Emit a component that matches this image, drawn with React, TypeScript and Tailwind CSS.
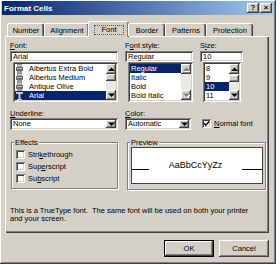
import React from 'react';

const FONT = "font-['Liberation_Sans',Arial,sans-serif]";
const RAISED =
  'shadow-[inset_-1px_-1px_#404040,inset_1px_1px_#ffffff,inset_-2px_-2px_#808080,inset_2px_2px_#d4d0c8]';
const SUNKEN =
  'shadow-[inset_1px_1px_#808080,inset_-1px_-1px_#ffffff,inset_2px_2px_#404040,inset_-2px_-2px_#d4d0c8]';

function Arrow({ dir, disabled }: { dir: 'up' | 'down'; disabled?: boolean }) {
  const pts = dir === 'up' ? '0,4 3.5,0.5 7,4' : '0,0.5 7,0.5 3.5,4';
  return (
    <svg width="7" height="5" viewBox="0 0 7 5">
      {disabled ? <polygon points={pts} fill="#ffffff" transform="translate(1,1)" /> : null}
      <polygon points={pts} fill={disabled ? '#808080' : '#000000'} />
    </svg>
  );
}

function ScrollBar({ thumb, disabled }: { thumb?: number; disabled?: boolean }) {
  return (
    <div className="flex w-[10px] shrink-0 flex-col">
      <div className={`flex h-[10px] items-center justify-center bg-[#d4d0c8] ${RAISED}`}>
        <Arrow dir="up" disabled={disabled} />
      </div>
      <div className="flex flex-1 flex-col bg-[#ebe9e4]">
        {thumb !== undefined ? (
          <div className={`h-[7px] bg-[#d4d0c8] ${RAISED}`} style={{ marginTop: thumb }} />
        ) : null}
      </div>
      <div className={`flex h-[10px] items-center justify-center bg-[#d4d0c8] ${RAISED}`}>
        <Arrow dir="down" disabled={disabled} />
      </div>
    </div>
  );
}

function PrinterIcon() {
  return (
    <svg width="7" height="9" viewBox="0 0 7 9" className="shrink-0">
      <rect x="1" y="0" width="5" height="9" fill="#9a9a9a" />
      <rect x="0" y="3" width="7" height="4" fill="#6e6e6e" />
      <rect x="2" y="1" width="3" height="1" fill="#d8d8d8" />
      <rect x="1" y="4" width="5" height="1" fill="#bdbdbd" />
    </svg>
  );
}

function TrueTypeIcon() {
  return (
    <svg width="7" height="8" viewBox="0 0 7 8" className="shrink-0">
      <rect x="0" y="0" width="7" height="2" fill="#c8c8c8" />
      <rect x="2.5" y="0" width="2" height="8" fill="#c8c8c8" />
      <rect x="1" y="7" width="5" height="1" fill="#c8c8c8" />
    </svg>
  );
}

function ListBox({
  items,
  selected,
  icons,
  thumb,
  disabled,
  className,
}: {
  items: string[];
  selected: number;
  icons?: boolean;
  thumb?: number;
  disabled?: boolean;
  className?: string;
}) {
  return (
    <div className={`flex h-[40px] bg-white p-[2px] ${SUNKEN} ${className ?? ''}`}>
      <div className="min-w-0 flex-1 overflow-hidden">
        {items.map((item, i) => (
          <div
            key={item}
            className={`flex h-[9px] items-center gap-[6px] whitespace-nowrap pl-[1px] ${
              i === selected ? 'bg-[#0a246a] text-white' : ''
            }`}
          >
            {icons ? i === items.length - 1 ? <TrueTypeIcon /> : <PrinterIcon /> : null}
            <span>{item}</span>
          </div>
        ))}
      </div>
      <ScrollBar thumb={thumb} disabled={disabled} />
    </div>
  );
}

function TextField({ value }: { value: string }) {
  return (
    <div className={`flex h-[11px] items-center bg-white px-[3px] ${SUNKEN}`}>
      <span className="leading-none">{value}</span>
    </div>
  );
}

function Combo({ value, className }: { value: string; className?: string }) {
  return (
    <div className={`flex h-[12px] items-center bg-white p-[2px] pl-[3px] ${SUNKEN} ${className ?? ''}`}>
      <span className="flex-1 leading-none">{value}</span>
      <div className={`flex h-[8px] w-[10px] items-center justify-center bg-[#d4d0c8] ${RAISED}`}>
        <Arrow dir="down" />
      </div>
    </div>
  );
}

function Check({ checked }: { checked?: boolean }) {
  return (
    <span className={`flex h-[9px] w-[9px] shrink-0 items-center justify-center bg-white ${SUNKEN}`}>
      {checked ? (
        <svg width="7" height="7" viewBox="0 0 7 7">
          <path d="M1 3.3 L2.8 5.2 L6.2 1.4" stroke="#000" strokeWidth="1.5" fill="none" />
        </svg>
      ) : null}
    </span>
  );
}

function Label({ pre = '', k, post }: { pre?: string; k: string; post: string }) {
  return (
    <span className="whitespace-nowrap">
      {pre}
      <span className="underline underline-offset-1">{k}</span>
      {post}
    </span>
  );
}

function GroupBox({ title, className, children }: { title: string; className?: string; children?: React.ReactNode }) {
  return (
    <div
      className={`relative border border-[#808080] shadow-[1px_1px_0_#ffffff,inset_1px_1px_0_#ffffff] ${className ?? ''}`}
    >
      <span className="absolute -top-[5px] left-[2px] bg-[#d4d0c8] px-[1px] leading-[9px]">{title}</span>
      {children}
    </div>
  );
}

const tabs = [
  { label: 'Number', w: 37 },
  { label: 'Alignment', w: 45 },
  { label: 'Font', w: 39 },
  { label: 'Border', w: 37 },
  { label: 'Patterns', w: 41 },
  { label: 'Protection', w: 47 },
];

export default function App() {
  return (
    <div className={`h-[265px] w-[280px] bg-white text-[7.5px] leading-[9px] text-black ${FONT}`}>
      <div className={`flex h-[264px] w-[276px] flex-col bg-[#d4d0c8] px-[2px] pt-[1px] ${RAISED}`}>
        {/* title bar */}
        <div className="flex h-[14px] items-center bg-gradient-to-r from-[#0a246a] to-[#a6caf0] pl-[2px] pr-[2px]">
          <span className="flex-1 text-[8px] font-bold text-white">Format Cells</span>
          <div className="flex gap-[1px]">
            <div className={`flex h-[10px] w-[12px] items-center justify-center bg-[#d4d0c8] text-[8px] font-bold leading-none ${RAISED}`}>
              ?
            </div>
            <div className={`flex h-[10px] w-[12px] items-center justify-center bg-[#d4d0c8] text-[8px] font-bold leading-none ${RAISED}`}>
              ×
            </div>
          </div>
        </div>

        <div className="ml-[3px] mt-[7px] w-[264px]">
          {/* tabs */}
          <div className="relative z-10 flex h-[14px] items-end pl-[2px]">
            {tabs.map((t) =>
              t.label === 'Font' ? (
                <div
                  key={t.label}
                  className="-mx-[1px] -mb-[1px] flex h-[16px] items-center justify-center rounded-t-[2px] border-l border-t border-white bg-[#d4d0c8] shadow-[inset_-1px_0_#404040,inset_-2px_0_#808080]"
                  style={{ width: t.w + 2 }}
                >
                  <span className="border border-dotted border-[#555] px-[6px] leading-[8px]">{t.label}</span>
                </div>
              ) : (
                <div
                  key={t.label}
                  className="flex h-[13px] items-center justify-center rounded-t-[2px] border-l border-t border-white shadow-[inset_-1px_0_#404040,inset_-2px_0_#808080]"
                  style={{ width: t.w }}
                >
                  {t.label}
                </div>
              ),
            )}
          </div>

          {/* panel */}
          <div className="flex h-[197px] flex-col border-l border-t border-white pl-[4px] pt-[4px] shadow-[inset_-1px_-1px_#404040,inset_-2px_-2px_#808080]">
            <div className="flex gap-[7px]">
              <div className="flex w-[108px] flex-col">
                <div className="h-[10px]"><Label k="F" post="ont:" /></div>
                <TextField value="Arial" />
                <ListBox
                  className="ml-[3px]"
                  items={['Albertus Extra Bold', 'Albertus Medium', 'Antique Olive', 'Arial']}
                  selected={3}
                  icons
                  thumb={0}
                />
              </div>
              <div className="flex w-[68px] flex-col">
                <div className="h-[10px]"><Label pre="F" k="o" post="nt style:" /></div>
                <TextField value="Regular" />
                <ListBox className="ml-[3px]" items={['Regular', 'Italic', 'Bold', 'Bold Italic']} selected={0} disabled />
              </div>
              <div className="flex w-[43px] flex-col">
                <div className="h-[10px]"><Label pre="S" k="i" post="ze:" /></div>
                <TextField value="10" />
                <ListBox className="ml-[3px] mr-[2px]" items={['8', '9', '10', '11']} selected={2} thumb={1} />
              </div>
            </div>

            <div className="mt-[7px] flex gap-[7px]">
              <div className="flex w-[108px] flex-col">
                <div className="h-[9px]"><Label k="U" post="nderline:" /></div>
                <Combo value="None" />
              </div>
              <div className="flex w-[68px] flex-col">
                <div className="h-[9px]"><Label k="C" post="olor:" /></div>
                <Combo value="Automatic" className="w-[66px]" />
              </div>
              <div className="flex items-center gap-[3px] pl-[2px] pt-[8px]">
                <Check checked />
                <Label k="N" post="ormal font" />
              </div>
            </div>

            <div className="mt-[12px] flex gap-[9px] pl-[1px]">
              <GroupBox title="Effects" className="h-[47px] w-[107px]">
                <div className="flex flex-col gap-[3px] pl-[4px] pt-[7px]">
                  <div className="flex items-center gap-[3px]">
                    <Check />
                    <Label pre="Stri" k="k" post="ethrough" />
                  </div>
                  <div className="flex items-center gap-[3px]">
                    <Check />
                    <Label pre="Sup" k="e" post="rscript" />
                  </div>
                  <div className="flex items-center gap-[3px]">
                    <Check />
                    <Label pre="Su" k="b" post="script" />
                  </div>
                </div>
              </GroupBox>
              <GroupBox title="Preview" className="h-[48px] w-[139px]">
                <div className="ml-[3px] mr-[2px] mt-[4px] flex h-[37px] items-center border border-[#404040] bg-white">
                  <div className="mt-[8px] h-[1px] w-[17px] bg-black" />
                  <span className="flex-1 text-center text-[9px] leading-none">AaBbCcYyZz</span>
                  <div className="mt-[8px] h-[1px] w-[20px] bg-black" />
                </div>
              </GroupBox>
            </div>

            <p className="mt-[17px] leading-[8px]">
              This is a TrueType font.&nbsp; The same font will be used on both your printer
              <br />
              and your screen.
            </p>
          </div>

          {/* buttons */}
          <div className="mt-[7px] flex justify-end gap-[5px]">
            <button className={`h-[17px] w-[50px] border border-black bg-[#d4d0c8] ${RAISED}`}>OK</button>
            <button className={`h-[17px] w-[50px] bg-[#d4d0c8] ${RAISED}`}>Cancel</button>
          </div>
        </div>
      </div>
    </div>
  );
}
